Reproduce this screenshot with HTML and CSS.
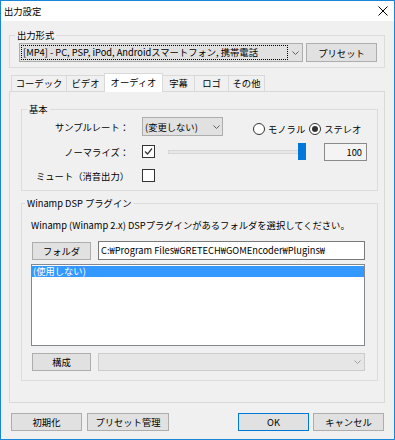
FILE: index.html
```html
<!DOCTYPE html>
<html lang="ja">
<head>
    <meta charset="UTF-8">
    <title>出力設定</title>
    <link rel="stylesheet" href="styles.css">
</head>
<body>
    <div class="window">
        <div class="titlebar">
            <span class="title">出力設定</span>
            <svg class="close" width="10" height="10" viewBox="0 0 10 10">
                <path d="M0.5 0.5 L9.5 9.5 M9.5 0.5 L0.5 9.5" stroke="#000" stroke-width="1" fill="none"/>
            </svg>
        </div>

        <div class="content">
            <!-- Output format -->
            <fieldset class="group format">
                <legend class="format-legend">出力形式</legend>
                <div class="format-row">
                    <div class="combo format-combo">
                        <span class="focus-text">[MP4] - PC, PSP, iPod, Androidスマートフォン, 携帯電話</span>
                        <svg class="chevron" width="7" height="4" viewBox="0 0 7 4"><path d="M0.5 0.5 L3.5 3.5 L6.5 0.5" stroke="#606060" fill="none"/></svg>
                    </div>
                    <button class="btn preset-btn">プリセット</button>
                </div>
            </fieldset>

            <!-- Tabs -->
            <div class="tabs">
                <div class="tab tab-codec">コーデック</div>
                <div class="tab tab-video">ビデオ</div>
                <div class="tab tab-audio active">オーディオ</div>
                <div class="tab tab-sub">字幕</div>
                <div class="tab tab-logo">ロゴ</div>
                <div class="tab tab-other">その他</div>
            </div>

            <div class="panel">
                <fieldset class="group basic">
                    <legend class="basic-legend">基本</legend>
                    <div class="basic-body">
                        <div class="row">
                            <div class="row-label">サンプルレート：</div>
                            <div class="combo rate-combo">
                                <span>(変更しない)</span>
                                <svg class="chevron" width="7" height="4" viewBox="0 0 7 4"><path d="M0.5 0.5 L3.5 3.5 L6.5 0.5" stroke="#606060" fill="none"/></svg>
                            </div>
                            <div class="radios">
                                <span class="radio"></span><span class="radio-text">モノラル</span>
                                <span class="radio checked"></span><span class="radio-text">ステレオ</span>
                            </div>
                        </div>
                        <div class="row row-gap6">
                            <div class="row-label">ノーマライズ：</div>
                            <div class="check">
                                <svg width="11" height="11" viewBox="0 0 11 11"><path d="M2 5.5 L4.5 8 L9 2.5" stroke="#333" stroke-width="1.2" fill="none"/></svg>
                            </div>
                            <div class="slider">
                                <div class="slider-track"></div>
                                <div class="slider-thumb"></div>
                            </div>
                            <div class="number">100</div>
                        </div>
                        <div class="row row-gap5">
                            <div class="row-label">ミュート（消音出力）</div>
                            <div class="check"></div>
                        </div>
                    </div>
                </fieldset>

                <fieldset class="group dsp">
                    <legend class="dsp-legend">Winamp DSP プラグイン</legend>
                    <div class="dsp-body">
                        <div class="dsp-text">Winamp (Winamp 2.x) DSPプラグインがあるフォルダを選択してください。</div>
                        <div class="dsp-row folder-row">
                            <button class="btn small-btn">フォルダ</button>
                            <div class="edit">C:₩Program Files₩GRETECH₩GOMEncoder₩Plugins₩</div>
                        </div>
                        <div class="listbox">
                            <div class="list-item selected">(使用しない)</div>
                        </div>
                        <div class="dsp-row config-row">
                            <button class="btn small-btn">構成</button>
                            <div class="combo disabled-combo">
                                <svg class="chevron" width="7" height="4" viewBox="0 0 7 4"><path d="M0.5 0.5 L3.5 3.5 L6.5 0.5" stroke="#a0a0a0" fill="none"/></svg>
                            </div>
                        </div>
                    </div>
                </fieldset>
            </div>

            <div class="footer">
                <button class="btn foot-btn reset-btn">初期化</button>
                <button class="btn foot-btn manage-btn">プリセット管理</button>
                <button class="btn foot-btn ok-btn">OK</button>
                <button class="btn foot-btn cancel-btn">キャンセル</button>
            </div>
        </div>
    </div>
</body>
</html>
```

FILE: styles.css
```css
body {
    margin: 0;
    font-family: "Noto Sans CJK JP", sans-serif;
    font-size: 9.3px;
    line-height: 12px;
    color: #000;
}
.window {
    width: 395px;
    height: 440px;
    box-sizing: border-box;
    border: 1px solid #1a86d8;
    background: #f0f0f0;
    display: flex;
    flex-direction: column;
}
.titlebar {
    height: 20px;
    flex: none;
    background: #fff;
    display: flex;
    align-items: center;
    justify-content: space-between;
    padding: 0 6px 0 3px;
}
.content {
    padding: 0 9px 0 8px;
}

/* group boxes */
.group {
    margin: 0;
    padding: 0;
    min-width: 0;
    border: 1px solid #dcdcdc;
}
.group legend {
    padding: 0 2px;
    line-height: 13px;
}
.format {
    margin-top: 8px;
}
.format-legend {
    margin-left: 5px;
}
.format-row {
    display: flex;
    gap: 3px;
    padding: 1px 7px 5px 9px;
}

/* combos and buttons */
.combo {
    box-sizing: border-box;
    height: 19px;
    border: 1px solid #adadad;
    background: #e1e1e1;
    display: flex;
    align-items: center;
}
.format-combo {
    width: 284px;
    padding: 1px;
}
.focus-text {
    flex: 1;
    height: 15px;
    line-height: 13px;
    border: 1px dotted #000;
    box-sizing: border-box;
    padding-left: 1px;
    white-space: nowrap;
    overflow: hidden;
}
.format-combo .chevron {
    margin: 0 2px 0 4px;
}
.btn {
    box-sizing: border-box;
    border: 1px solid #adadad;
    background: #e1e1e1;
    font: inherit;
    color: #000;
    padding: 0;
    margin: 0;
}
.preset-btn {
    width: 71px;
    height: 19px;
}

/* tabs */
.tabs {
    display: flex;
    align-items: flex-end;
    height: 18px;
    margin-top: 5px;
    padding-left: 2px;
}
.tab {
    box-sizing: border-box;
    height: 16px;
    border: 1px solid #d9d9d9;
    border-bottom: none;
    background: #f0f0f0;
    text-align: center;
    line-height: 14px;
    margin-left: -1px;
}
.tab-codec { width: 56px; margin-left: 0; }
.tab-video { width: 39px; }
.tab-audio { width: 59px; }
.tab-sub { width: 33px; }
.tab-logo { width: 35px; }
.tab-other { width: 37px; }
.tab.active {
    height: 19px;
    margin-bottom: -1px;
    background: #fff;
    line-height: 16px;
    position: relative;
    z-index: 1;
}
.panel {
    box-sizing: border-box;
    height: 312px;
    border: 1px solid #d9d9d9;
    padding: 11px 6px 0 11px;
}

/* basic group */
.basic-legend {
    margin-left: 5px;
}
.basic-body {
    padding: 1px 0 5px 0;
}
.row {
    display: flex;
    align-items: center;
    height: 19px;
}
.row-gap6 { margin-top: 6px; }
.row-gap5 { margin-top: 5px; }
.row-label {
    width: 107px;
    text-align: right;
    margin-right: 13px;
    white-space: nowrap;
}
.rate-combo {
    width: 81px;
    padding-left: 2px;
    justify-content: space-between;
}
.rate-combo .chevron {
    margin-right: 2px;
}
.radios {
    display: flex;
    align-items: center;
    margin-left: 30px;
    margin-top: 4px;
}
.radio {
    box-sizing: border-box;
    width: 12px;
    height: 12px;
    border: 1px solid #333;
    border-radius: 50%;
    background: #fff;
    display: flex;
    align-items: center;
    justify-content: center;
}
.radio.checked::after {
    content: "";
    width: 6px;
    height: 6px;
    border-radius: 50%;
    background: #333;
}
.radio-text {
    margin: 0 4px 0 3px;
}
.check {
    box-sizing: border-box;
    width: 13px;
    height: 13px;
    border: 1px solid #333;
    background: #fff;
    display: flex;
}
.slider {
    display: flex;
    align-items: center;
    width: 138px;
    margin-left: 13px;
}
.slider-track {
    flex: 1;
    height: 4px;
    box-sizing: border-box;
    border: 1px solid #d6d6d6;
    background: #e7e7e7;
}
.slider-thumb {
    width: 8px;
    height: 17px;
    margin-left: -4px;
    background: #0078d7;
}
.number {
    box-sizing: border-box;
    width: 43px;
    height: 18px;
    margin-left: 18px;
    border: 1px solid #8a8a8a;
    background: #f4f4f4;
    text-align: right;
    padding-right: 4px;
    line-height: 16px;
}

/* dsp group */
.dsp {
    margin-top: 6px;
}
.dsp-legend {
    margin-left: 3px;
}
.dsp-body {
    padding: 9px 12px 9px 9px;
}
.dsp-text {
    height: 12px;
    white-space: nowrap;
}
.dsp-row {
    display: flex;
    align-items: center;
    height: 19px;
}
.folder-row {
    margin-top: 10px;
}
.small-btn {
    width: 59px;
    height: 18px;
    margin-left: 1px;
}
.edit {
    box-sizing: border-box;
    width: 267px;
    height: 19px;
    margin-left: 7px;
    border: 1px solid #7a7a7a;
    background: #fff;
    padding-left: 2px;
    line-height: 17px;
    white-space: nowrap;
}
.listbox {
    box-sizing: border-box;
    height: 82px;
    margin-top: 4px;
    border: 1px solid #828790;
    background: #fff;
    padding: 1px 0;
}
.list-item {
    height: 11px;
    line-height: 11px;
    padding-left: 1px;
}
.list-item.selected {
    background: #3399ff;
    color: #fff;
}
.config-row {
    margin-top: 6px;
}
.disabled-combo {
    width: 267px;
    height: 18px;
    margin-left: 7px;
    border-color: #cccccc;
    background: #e6e6e6;
    justify-content: flex-end;
}
.disabled-combo .chevron {
    margin-right: 3px;
}

/* footer */
.footer {
    display: flex;
    margin-top: 10px;
    padding: 0 1px;
}
.foot-btn {
    width: 71px;
    height: 18px;
}
.reset-btn { margin-left: 1px; }
.manage-btn { width: 82px; margin-left: 5px; }
.ok-btn {
    margin-left: auto;
    border-color: #0078d7;
}
.cancel-btn { margin-left: 4px; }
```
